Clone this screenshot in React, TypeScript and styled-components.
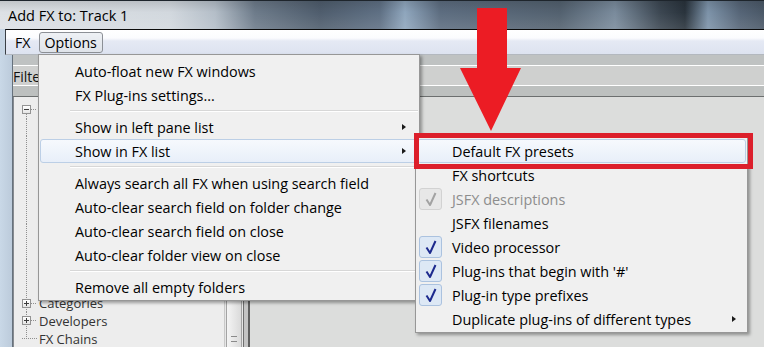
import React from "react";
import styled, { createGlobalStyle } from "styled-components";

const GlobalStyle = createGlobalStyle`
  html, body {
    margin: 0;
    padding: 0;
    background: #dcdddc;
  }
  body {
    font-family: "Open Sans", "Noto Sans", sans-serif;
    color: #000;
  }
`;

const Screen = styled.div`
  position: relative;
  width: 764px;
  height: 347px;
  overflow: hidden;
  display: flex;
  flex-direction: column;
  background: #dcdddc;
`;

const TitleBar = styled.div`
  flex: none;
  height: 28px;
  border-top: 1px solid #1e252c;
  display: flex;
  align-items: center;
  padding-left: 8px;
  font-size: 14.5px;
  background:
    linear-gradient(to bottom, rgba(0, 0, 0, 0.12), rgba(255, 255, 255, 0) 40%, rgba(255, 255, 255, 0.1)),
    linear-gradient(
      to right,
      #dde1e5 0,
      #d2d8de 170px,
      #b4bec8 215px,
      #6d7b8a 255px,
      #4f5d6d 320px,
      #5f7084 380px,
      #8fa6bd 405px,
      #5d6d80 440px,
      #53616f 560px,
      #7a8b9c 615px,
      #3c4752 660px,
      #29333c 685px,
      #7d93a9 708px,
      #566577 740px,
      #4a5867 764px
    );
`;

const Frame = styled.div`
  flex: 1;
  display: flex;
  flex-direction: column;
  background: #c6d5e4;
`;

const MenuBar = styled.div`
  flex: none;
  height: 24px;
  margin-left: 5px;
  border-top: 1px solid #0c0c0c;
  border-left: 1px solid #3a3f45;
  border-bottom: 1px solid #b3b8bf;
  display: flex;
  align-items: center;
  gap: 2px;
  padding-left: 3px;
  font-size: 14.2px;
  background: linear-gradient(to bottom, #ffffff 0, #fbfcfe 8px, #e5e9f4 11px, #dde3f0 100%);
`;

const MenuBarItem = styled.div<{ $open?: boolean }>`
  height: 19px;
  display: flex;
  align-items: center;
  padding: 0 5px;
  border: 1px solid ${(p) => (p.$open ? "#8c9096" : "transparent")};
  border-radius: 3px;
  background: ${(p) => (p.$open ? "linear-gradient(#eef1f5, #dfe3e9)" : "transparent")};
`;

const Body = styled.div`
  flex: 1;
  display: flex;
  min-height: 0;
`;

const SideFrame = styled.div`
  flex: none;
  width: 12px;
  border-right: 1px solid #66717c;
  background: linear-gradient(to right, #c9d8e7, #bccbdb);
`;

const Main = styled.div`
  flex: 1;
  display: flex;
  flex-direction: column;
  min-width: 0;
`;

const FilterBar = styled.div`
  flex: none;
  height: 42px;
  display: flex;
  align-items: center;
  font-size: 14px;
  color: #111;
  background: linear-gradient(
    to bottom,
    #bfc2c2 0,
    #bfc2c2 10px,
    #ffffff 10px,
    #ffffff 11px,
    #cfd0cf 11px,
    #cfd0cf 30px,
    #ffffff 30px,
    #ffffff 31px,
    #bdc0bf 31px,
    #bdc0bf 41px,
    #6c6f6f 41px
  );
`;

const Panes = styled.div`
  flex: 1;
  display: flex;
  min-height: 0;
`;

const TreeBox = styled.div`
  flex: none;
  width: 229px;
  display: flex;
  border-left: 1px solid #868a90;
  background: #ededed;
`;

const TreeList = styled.div`
  flex: 1;
  padding-top: 4px;
  font-size: 13px;
  color: #333;
`;

const TreeRow = styled.div<{ $line: "full" | "top" | "bottom"; $indent?: number }>`
  height: 17.6px;
  display: flex;
  align-items: center;
  padding-left: ${(p) => 8 + (p.$indent ?? 0) * 19}px;
  background-image: repeating-linear-gradient(to bottom, #8f8f8f 0, #8f8f8f 1px, transparent 1px, transparent 2px);
  background-repeat: no-repeat;
  background-size: ${(p) => (p.$line === "full" ? "1px 100%" : "1px 50%")};
  background-position: ${(p) => (p.$line === "bottom" ? "12px 100%" : "12px 0")};
  white-space: nowrap;
`;

const Expander = styled.span<{ $open?: boolean }>`
  position: relative;
  flex: none;
  width: 7px;
  height: 7px;
  border: 1px solid #939393;
  background: linear-gradient(#ffffff, #e4e4e4);

  &::before {
    content: "";
    position: absolute;
    left: 1px;
    top: 3px;
    width: 5px;
    height: 1px;
    background: #3d3d3d;
  }
  &::after {
    content: "";
    display: ${(p) => (p.$open ? "none" : "block")};
    position: absolute;
    left: 3px;
    top: 1px;
    width: 1px;
    height: 5px;
    background: #3d3d3d;
  }
`;

const Connector = styled.span<{ $width: number }>`
  flex: none;
  width: ${(p) => p.$width}px;
  height: 1px;
  background: repeating-linear-gradient(to right, #8f8f8f 0, #8f8f8f 1px, transparent 1px, transparent 2px);
`;

const TreeLabel = styled.span`
  margin-left: 2px;
`;

const ScrollTrack = styled.div`
  flex: none;
  width: 18px;
  display: flex;
  flex-direction: column;
  justify-content: flex-end;
  border-left: 1px solid #c9c9c9;
  background: #e6e6e6;
`;

const ScrollThumb = styled.div`
  height: 150px;
  margin: 0 1px;
  border: 1px solid #a3a3a3;
  border-bottom: none;
  border-radius: 2px 2px 0 0;
  display: flex;
  align-items: flex-end;
  justify-content: center;
  padding-bottom: 5px;
  background: linear-gradient(to right, #f4f4f4, #dadada);
`;

const Grip = styled.div`
  width: 6px;
  height: 4px;
  border-top: 1px solid #8a8a8a;
  border-bottom: 1px solid #8a8a8a;
`;

const Splitter = styled.div`
  flex: none;
  width: 4px;
  border-left: 1px solid #6e6e6e;
  border-right: 2px solid #5f5f5f;
  background: #c4c4c4;
`;

const ListArea = styled.div`
  flex: 1;
  background: #dcdddc;
`;

const Menu = styled.div<{ $left: number; $top: number; $width: number }>`
  position: absolute;
  left: ${(p) => p.$left}px;
  top: ${(p) => p.$top}px;
  width: ${(p) => p.$width}px;
  box-sizing: border-box;
  padding: 4px 1px 1px;
  border: 1px solid #979797;
  background: #f0f0f0;
  box-shadow: 2px 2px 3px rgba(0, 0, 0, 0.35);
  font-size: 14.4px;
`;

const MenuItem = styled.div<{ $hot?: boolean; $disabled?: boolean }>`
  position: relative;
  height: 24px;
  box-sizing: border-box;
  display: flex;
  align-items: center;
  border: 1px solid ${(p) => (p.$hot ? "#bccfe6" : "transparent")};
  border-radius: 3px;
  background: ${(p) => (p.$hot ? "linear-gradient(#f6f9fd, #e8eff9)" : "transparent")};
  color: ${(p) => (p.$disabled ? "#8d8d8d" : "#000")};
  white-space: nowrap;
`;

const CheckCell = styled.span<{ $state?: "on" | "grey" }>`
  flex: none;
  width: 23px;
  height: 22px;
  margin-left: 1px;
  box-sizing: border-box;
  display: flex;
  align-items: center;
  justify-content: center;
  border-radius: 3px;
  border: 1px solid
    ${(p) => (p.$state === "on" ? "#abc2df" : p.$state === "grey" ? "#d2d2d2" : "transparent")};
  background: ${(p) =>
    p.$state === "on" ? "#dde8f5" : p.$state === "grey" ? "#e7e7e7" : "transparent"};
`;

const ItemText = styled.span`
  margin-left: 10px;
`;

const SubArrow = styled.span<{ $right: number }>`
  position: absolute;
  right: ${(p) => p.$right}px;
  top: 8px;
  width: 0;
  height: 0;
  border-top: 3.5px solid transparent;
  border-bottom: 3.5px solid transparent;
  border-left: 4px solid #1a1a1a;
`;

const Separator = styled.div`
  height: 8px;
  display: flex;
  align-items: center;
  padding-left: 30px;

  &::before {
    content: "";
    flex: 1;
    height: 1px;
    border-bottom: 1px solid #ffffff;
    background: #d7d7d7;
  }
`;

const Highlight = styled.div`
  position: absolute;
  left: 414px;
  top: 133px;
  width: 339px;
  height: 36px;
  box-sizing: border-box;
  border: 5px solid #dc1f2b;
`;

const ArrowMark = styled.svg`
  position: absolute;
  left: 455px;
  top: 5px;
`;

type Entry =
  | { sep: true }
  | { label: string; sub?: boolean; hot?: boolean; check?: "on" | "grey"; disabled?: boolean };

const optionsMenu: Entry[] = [
  { label: "Auto-float new FX windows" },
  { label: "FX Plug-ins settings..." },
  { sep: true },
  { label: "Show in left pane list", sub: true },
  { label: "Show in FX list", sub: true, hot: true },
  { sep: true },
  { label: "Always search all FX when using search field" },
  { label: "Auto-clear search field on folder change" },
  { label: "Auto-clear search field on close" },
  { label: "Auto-clear folder view on close" },
  { sep: true },
  { label: "Remove all empty folders" },
];

const fxListMenu: Entry[] = [
  { label: "Default FX presets", hot: true },
  { label: "FX shortcuts" },
  { label: "JSFX descriptions", check: "grey", disabled: true },
  { label: "JSFX filenames" },
  { label: "Video processor", check: "on" },
  { label: "Plug-ins that begin with '#'", check: "on" },
  { label: "Plug-in type prefixes", check: "on" },
  { label: "Duplicate plug-ins of different types", sub: true },
];

// rows of the expanded root folder, all hidden behind the open menu
const hiddenRows = 10;

function CheckMark({ grey }: { grey?: boolean }) {
  return (
    <svg width="14" height="16" viewBox="0 0 14 16">
      <path
        d="M2.5 8.5 L6 14 L11.5 2"
        fill="none"
        stroke={grey ? "#a2a2a2" : "#1d2a8e"}
        strokeWidth="2"
        strokeLinejoin="round"
      />
    </svg>
  );
}

function MenuList({ items, arrowRight }: { items: Entry[]; arrowRight: number }) {
  return (
    <>
      {items.map((it, i) =>
        "sep" in it ? (
          <Separator key={i} />
        ) : (
          <MenuItem key={i} $hot={it.hot} $disabled={it.disabled}>
            <CheckCell $state={it.check}>{it.check && <CheckMark grey={it.check === "grey"} />}</CheckCell>
            <ItemText>{it.label}</ItemText>
            {it.sub && <SubArrow $right={arrowRight} />}
          </MenuItem>
        )
      )}
    </>
  );
}

export default function App() {
  return (
    <Screen>
      <GlobalStyle />
      <TitleBar>Add FX to: Track 1</TitleBar>
      <Frame>
        <MenuBar>
          <MenuBarItem>FX</MenuBarItem>
          <MenuBarItem $open>Options</MenuBarItem>
        </MenuBar>
        <Body>
          <SideFrame />
          <Main>
            <FilterBar>Filter:</FilterBar>
            <Panes>
              <TreeBox>
                <TreeList>
                  <TreeRow $line="bottom">
                    <Expander $open />
                    <Connector $width={6} />
                  </TreeRow>
                  {Array.from({ length: hiddenRows }, (_, i) => (
                    <TreeRow key={i} $line="full" $indent={1} />
                  ))}
                  <TreeRow $line="full">
                    <Expander />
                    <Connector $width={6} />
                    <TreeLabel>Categories</TreeLabel>
                  </TreeRow>
                  <TreeRow $line="full">
                    <Expander />
                    <Connector $width={6} />
                    <TreeLabel>Developers</TreeLabel>
                  </TreeRow>
                  <TreeRow $line="top">
                    <Connector $width={4} />
                    <Connector $width={11} />
                    <TreeLabel>FX Chains</TreeLabel>
                  </TreeRow>
                </TreeList>
                <ScrollTrack>
                  <ScrollThumb>
                    <Grip />
                  </ScrollThumb>
                </ScrollTrack>
              </TreeBox>
              <Splitter />
              <ListArea />
            </Panes>
          </Main>
        </Body>
      </Frame>

      <Menu $left={38} $top={54} $width={382}>
        <MenuList items={optionsMenu} arrowRight={11} />
      </Menu>
      <Menu $left={415} $top={134} $width={333}>
        <MenuList items={fxListMenu} arrowRight={9} />
      </Menu>

      <Highlight />
      <ArrowMark width="72" height="130" viewBox="0 0 72 130">
        <polygon points="22,3 52,3 52,63 66,63 36,126 5,63 22,63" fill="#ec1c24" />
      </ArrowMark>
    </Screen>
  );
}
